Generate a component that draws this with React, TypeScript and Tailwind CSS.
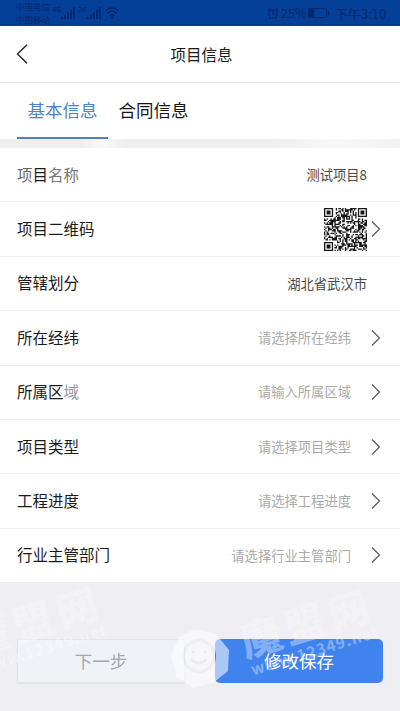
type Row = {
  label: string;
  value: string;
  link?: boolean;
  placeholder?: boolean;
  qr?: boolean;
};

const rows: Row[] = [
  { label: "项目名称", value: "测试项目8" },
  { label: "项目二维码", value: "", qr: true, link: true },
  { label: "管辖划分", value: "湖北省武汉市" },
  { label: "所在经纬", value: "请选择所在经纬", placeholder: true, link: true },
  { label: "所属区域", value: "请输入所属区域", placeholder: true, link: true },
  { label: "项目类型", value: "请选择项目类型", placeholder: true, link: true },
  { label: "工程进度", value: "请选择工程进度", placeholder: true, link: true },
  { label: "行业主管部门", value: "请选择行业主管部门", placeholder: true, link: true },
];

const QR_SIZE = 33;

function qrPath() {
  let seed = 71;
  let d = "";
  const finders = [
    [0, 0],
    [QR_SIZE - 7, 0],
    [0, QR_SIZE - 7],
  ];
  for (let y = 0; y < QR_SIZE; y++) {
    for (let x = 0; x < QR_SIZE; x++) {
      seed = (seed * 16807) % 2147483647;
      let on = seed % 100 < 55;
      for (const [fx, fy] of finders) {
        const r = Math.max(Math.abs(x - fx - 3), Math.abs(y - fy - 3));
        if (r <= 4) on = r !== 4 && r !== 2;
      }
      if (on) d += `M${x} ${y}h1v1h-1z`;
    }
  }
  return d;
}

function QrCode() {
  return (
    <svg viewBox="0 0 33 33" className="h-[43px] w-[43px]" fill="#161616">
      <path d={qrPath()} />
    </svg>
  );
}

function Chevron() {
  return (
    <svg viewBox="0 0 10 16" className="h-4 w-[10px]" fill="none" stroke="#555" strokeWidth="1.1">
      <path d="M1 .5 8.5 8 1 15.5" />
    </svg>
  );
}

function Signal({ tag }: { tag: string }) {
  return (
    <div className="flex h-[13px] items-start">
      <span className="text-[6px] leading-[7px] font-bold">{tag}</span>
      <svg viewBox="0 0 14 12" className="mt-px h-3 w-[14px]" fill="currentColor">
        <path d="M0 10h2v2H0zM3 8h2v4H3zM6 5.500h2V12H6zM9 3h2v9H9zM12 0h1.800v12H12z" />
      </svg>
    </div>
  );
}

function StatusBar() {
  return (
    <div className="flex h-[26px] shrink-0 items-center justify-between overflow-hidden bg-[#043f98] pr-[14px] pl-4 text-[#06286c]">
      <div className="flex h-full">
        <div className="flex w-[37px] flex-col text-[8.5px] leading-[13px] whitespace-nowrap">
          <span>中国电信</span>
          <span>中国移动</span>
        </div>
        <div className="flex gap-[4px] pt-[6px]">
          <Signal tag="4G" />
          <Signal tag="2G" />
          <svg viewBox="0 0 14 12" className="mt-px h-3 w-[14px]" fill="none" stroke="currentColor" strokeWidth="1.500">
            <path d="M.5 4Q7-2 13.500 4M2.500 6.500Q7 2 11.500 6.500M4.500 9Q7 6.500 9.500 9" />
            <circle cx="7" cy="10.800" r=".6" />
          </svg>
        </div>
      </div>
      <div className="flex items-center text-[13px] leading-none">
        <svg viewBox="0 0 14 14" className="mr-px h-[13px] w-[14px]" fill="none" stroke="currentColor" strokeWidth="1.300">
          <circle cx="7" cy="7.500" r="4.500" />
          <path d="M7 5v3h2M1 4l3-3M13 4l-3-3M3 13l1-1.500M11 13l-1-1.500" />
        </svg>
        <span className="w-[27px] text-[12.5px]">25%</span>
        <svg viewBox="0 0 22 10" className="h-[10px] w-[22px]" fill="none" stroke="currentColor">
          <rect x=".5" y=".5" width="18" height="9" rx="1" />
          <path d="M1.500 1.500h4v7h-4z" fill="currentColor" />
          <path d="M20.500 3v4" strokeWidth="1.500" />
        </svg>
        <span className="ml-[5px] w-[51px] whitespace-nowrap">下午3:10</span>
      </div>
    </div>
  );
}

function Watermark() {
  return (
    <div className="flex -rotate-[17deg] flex-col text-white">
      <span className="text-[41px] leading-[41px] font-black tracking-[5px]">魔盟网</span>
      <span className="pl-[2px] text-[15.5px] leading-[18px] font-bold tracking-[1px]">www.12349.net</span>
    </div>
  );
}

export default function App() {
  return (
    <div
      className="relative flex h-[711px] w-[400px] flex-col overflow-hidden bg-[#eeeef3] text-[#1b1b1b]"
      style={{ fontFamily: '"Noto Sans CJK SC", sans-serif' }}
    >
      <StatusBar />
      <header className="grid h-[57px] shrink-0 grid-cols-[1fr_auto_1fr] items-center border-b border-[#e4e7e8] bg-white px-4">
        <svg viewBox="0 0 12 20" className="h-5 w-3" fill="none" stroke="#222" strokeWidth="1.400">
          <path d="M11 .8 1.500 10l9.500 9.200" />
        </svg>
        <h1 className="pt-[2px] pl-[3px] text-[15.500px]">项目信息</h1>
      </header>
      <nav className="flex h-14 shrink-0 bg-white pl-[17px] text-[17.500px]">
        <div className="flex w-[91px] items-center justify-center border-b-2 border-[#527fbe] text-[#4b82c8]">
          基本信息
        </div>
        <div className="flex w-[91px] items-center justify-center border-b-2 border-transparent text-[#151515]">
          合同信息
        </div>
      </nav>
      <div className="flex h-[9px] shrink-0 justify-between bg-[#eee] pl-[78px]">
        <div className="w-12 bg-linear-to-r from-[#eee] via-[#f8f8f8] to-[#eee]" />
        <div className="w-[130px] bg-linear-to-r from-[#eee] via-[#f8f8f8] to-[#f1f1f1]" />
      </div>
      <main className="shrink-0 bg-white">
        {rows.map((row) => (
          <div
            key={row.label}
            className="flex h-[54.400px] items-center justify-between border-b border-[#eef0f0] pr-[19px] pl-[17px] last:h-[53.500px] last:border-0"
          >
            <span className="pb-px text-[15.500px]">
              {row.label === "项目名称" ? (
                <>
                  <span className="text-[#666]">项</span>目<span className="text-[#777]">名称</span>
                </>
              ) : row.label === "所属区域" ? (
                <>
                  所属区<span className="text-[#999]">域</span>
                </>
              ) : (
                row.label
              )}
            </span>
            <div className="flex items-center">
              {row.qr ? (
                <div className="mr-[4px]">
                  <QrCode />
                </div>
              ) : (
                <span
                  className={
                    row.placeholder
                      ? "mr-5 text-[13.300px] text-[#aaa]"
                      : "mr-[14px] text-[13.300px] text-[#4a4a4a]"
                  }
                >
                  {row.value}
                </span>
              )}
              {row.link && <Chevron />}
            </div>
          </div>
        ))}
      </main>
      <footer className="flex flex-1 items-start justify-between px-[17px] pt-[57px] text-[17.500px]">
        <button className="h-11 w-[168px] rounded-[2px] border border-[#e1e5ea] bg-[#eff3f8] text-[#a3a6aa] shadow-xs">
          <span className="relative z-10">下一步</span>
        </button>
        <button className="h-11 w-[168px] rounded-[5px] bg-[#4083ee] text-white">
          <span className="relative z-10">修改保存</span>
        </button>
      </footer>
      <div className="pointer-events-none absolute top-[598px] -left-[32px] opacity-35">
        <Watermark />
      </div>
      <div className="pointer-events-none absolute top-[600px] left-[240px] opacity-35">
        <Watermark />
      </div>
      <svg
        viewBox="0 0 60 60"
        className="pointer-events-none absolute top-[628px] left-[171px] h-[60px] w-[60px] opacity-55"
        fill="none"
      >
        <path
          fill="#fff"
          fillRule="evenodd"
          d="M23 1 45 6 58 22 57 43 42 55 22 60 5 48 0 27 8 9zM28 11a17 17 0 1 0 .1 0zM28 14a14 14 0 1 1-.1 0z"
        />
        <path d="M20 31q8 8 16 0M21 24h3M32 24h3" stroke="#e8eaf1" strokeWidth="2.500" />
      </svg>
    </div>
  );
}
